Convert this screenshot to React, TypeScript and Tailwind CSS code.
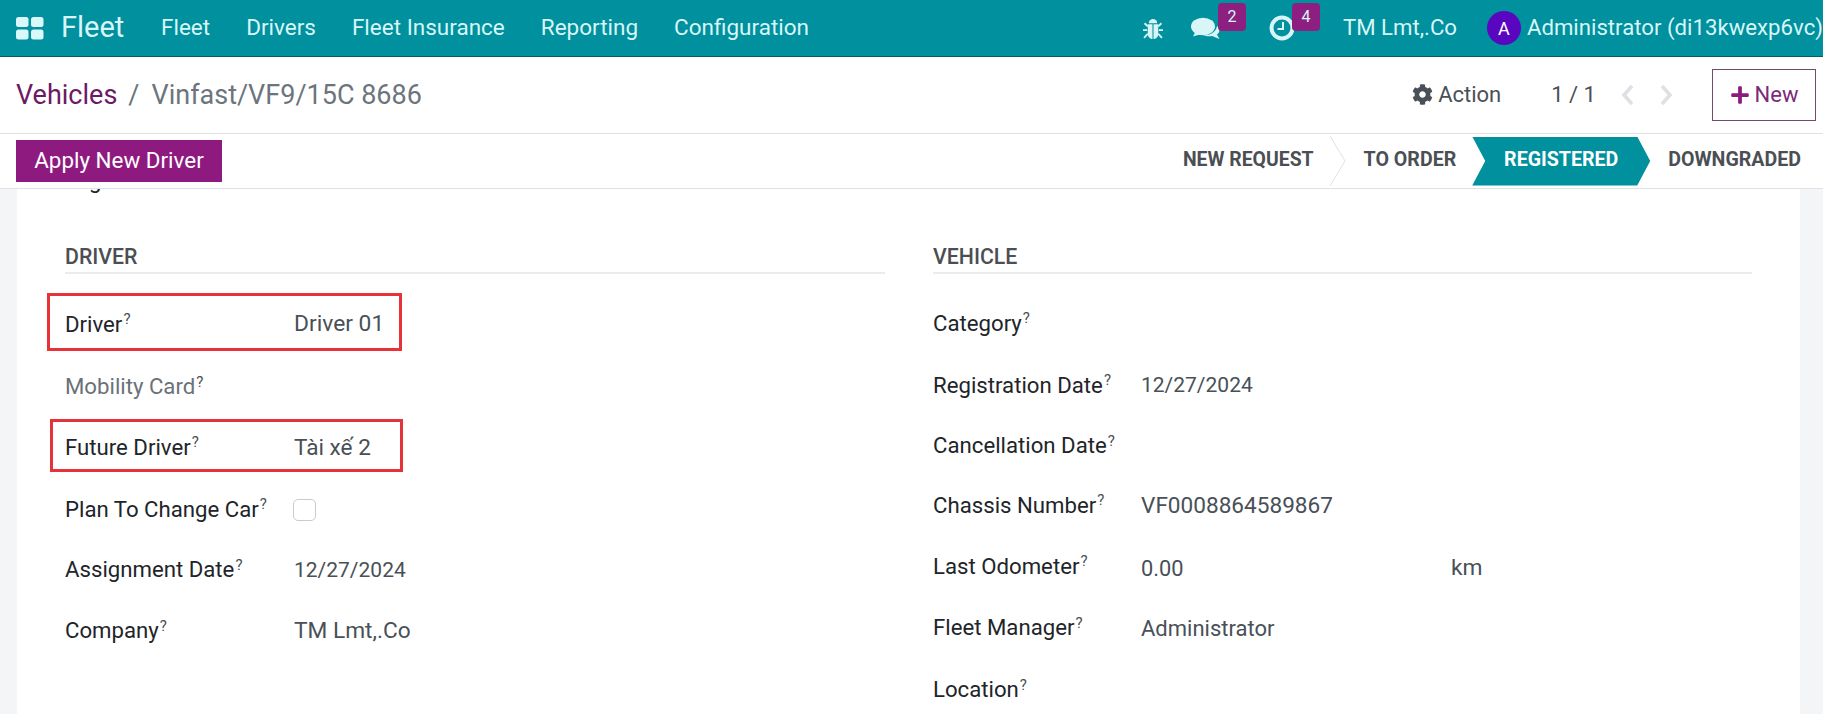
import { FaCog, FaPlus } from "react-icons/fa";

const leftRows = [
  { label: "Driver", value: "Driver 01", h: "h-[63px]", size: "text-[22.8px]" },
  { label: "Mobility Card", muted: true, h: "h-[60px] pt-[2px]" },
  { label: "Future Driver", value: "Tài xế 2", h: "h-[63px]", size: "text-[22.6px]" },
  { label: "Plan To Change Car", check: true, h: "h-[61px]" },
  { label: "Assignment Date", value: "12/27/2024", h: "h-[60px]", size: "text-[21px] pt-[2px]" },
  { label: "Company", value: "TM Lmt,.Co", h: "h-[60px] pt-[2px]", size: "text-[22.7px]" },
];

const rightRows = [
  { label: "Category", h: "h-[61px]" },
  { label: "Registration Date", value: "12/27/2024", h: "h-[61px] pt-[2px]", size: "text-[21px]" },
  { label: "Cancellation Date", h: "h-[60px] pt-[2px]" },
  { label: "Chassis Number", value: "VF0008864589867", h: "h-[61px]", size: "text-[22.6px]" },
  { label: "Last Odometer", value: "0.00", unit: "km", h: "h-[61px]", size: "text-[21.8px] pt-[5px]" },
  { label: "Fleet Manager", value: "Administrator", h: "h-[62px]", size: "text-[22px]" },
  { label: "Location", h: "h-[60px] pt-[2px]" },
];

function Label({ text, muted }: { text: string; muted?: boolean }) {
  return (
    <span className={muted ? "text-[#6b7177]" : "text-[#212529]"}>
      {text}
      <sup className="text-[15px] text-[#4a4f55] ml-px">?</sup>
    </span>
  );
}

function BugIcon() {
  return (
    <svg width="20" height="21" viewBox="0 0 19 20" fill="currentColor" stroke="currentColor" strokeWidth="0">
      <path d="M5.5 5a4 4 0 0 1 8 0z" />
      <path d="M4.5 6H9v14c-2.5 0-4.5-2-4.5-5z" />
      <path d="M14.5 6H10v14c2.5 0 4.5-2 4.5-5z" />
      <path d="M4.5 8 1.5 5M4 11.5H0M4.5 15 1 19M14.5 8l3-3M15 11.5h4M14.5 15l3.5 4" fill="none" strokeWidth="1.8" />
    </svg>
  );
}

function CommentsIcon() {
  return (
    <svg width="30" height="24" viewBox="0 0 30 24" fill="currentColor">
      <ellipse cx="12" cy="10.5" rx="12" ry="8.7" />
      <path d="M4.5 15.5 2 20.5l8.5-2.5z" />
      <path d="M26 10c3 2 3.5 6 0 8.5l2.5 4.5-7.500-3c-3 .5-7 0-9-.5C18.500 19.500 25 16.500 26 10z" />
    </svg>
  );
}

function ClockIcon() {
  return (
    <svg width="26" height="26" viewBox="0 0 26 26" fill="none" stroke="currentColor">
      <circle cx="13" cy="13" r="10.500" strokeWidth="4" />
      <path d="M14 7v7H8.500" strokeWidth="2" />
    </svg>
  );
}

function Chevron({ d }: { d: string }) {
  return (
    <svg width="16" height="22" viewBox="0 0 16 22" fill="none" stroke="#dde0e4" strokeWidth="3.500">
      <path d={d} />
    </svg>
  );
}

export default function App() {
  return (
    <div className="h-[714px] overflow-hidden bg-[#f4f5f7] text-[22.2px] font-['Roboto',sans-serif]">
      <header className="h-[57px] bg-[#00909e] border-b border-[#045f68] flex items-center text-[#d8f6f7] pl-4 pr-0">
        <svg width="28" height="23" viewBox="0 0 28 23" className="fill-[#d9f8fa]">
          <rect x="0" y="0" width="12.500" height="10" rx="2.500" />
          <rect x="15" y="0" width="12.500" height="10" rx="2.500" />
          <rect x="0" y="12.500" width="12.500" height="10" rx="2.500" />
          <rect x="15" y="12.500" width="12.500" height="10" rx="2.500" />
        </svg>
        <span className="ml-[17px] text-[29px] w-[100px]">Fleet</span>
        <nav className="flex gap-[36px] text-[22.5px]">
          <span>Fleet</span>
          <span>Drivers</span>
          <span>Fleet Insurance</span>
          <span>Reporting</span>
          <span>Configuration</span>
        </nav>
        <div className="ml-auto flex items-center whitespace-nowrap text-[22.2px]">
          <BugIcon />
          <div className="relative ml-[28px] w-[78px] h-[40px] flex items-center">
            <CommentsIcon />
            <span className="absolute left-[27px] top-[-5px] w-[28px] h-[28px] rounded-[4px] bg-[#8c1f7f] text-[16px] flex items-center justify-center">2</span>
          </div>
          <div className="relative w-[74px] h-[40px] flex items-center">
            <ClockIcon />
            <span className="absolute left-[23px] top-[-5px] w-[28px] h-[28px] rounded-[4px] bg-[#8c1f7f] text-[16px] flex items-center justify-center">4</span>
          </div>
          <span className="w-[144px]">TM Lmt,.Co</span>
          <span className="w-[34px] h-[34px] rounded-full bg-[#5a05c0] text-white text-[18px] flex items-center justify-center">A</span>
          <span className="ml-[6px]">Administrator (di13kwexp6vc)</span>
        </div>
      </header>

      <div className="h-[77px] bg-white border-b border-[#dee2e6] flex items-center pl-4 pr-[7px] text-[#495057]">
        <div className="text-[27px] flex">
          <span className="text-[#6c1a63]">Vehicles</span>
          <span className="ml-[11px] text-[#6c757d]">/</span>
          <span className="ml-[12px] text-[#6c757d]">Vinfast/VF9/15C 8686</span>
        </div>
        <div className="ml-auto flex items-center text-[22px]">
          <FaCog className="text-[21px] mb-[2px]" />
          <span className="ml-[5px] mb-[2px]">Action</span>
          <span className="ml-[50px] mb-[2px]">1 / 1</span>
          <span className="ml-[24px]"><Chevron d="M12 2 4 11l8 9" /></span>
          <span className="ml-[22px]"><Chevron d="M4 2l8 9-8 9" /></span>
          <button className="ml-[38px] w-[104px] h-[52px] border border-[#714b67] flex items-center justify-center text-[#7c2a75]">
            <FaPlus className="text-[20px] text-[#8c1a7f]" />
            <span className="ml-[5px] mb-[2px]">New</span>
          </button>
        </div>
      </div>

      <div className="h-[55px] bg-white border-b border-[#dee2e6] flex items-center pl-4 pr-[22px]">
        <button className="w-[206px] h-[42px] bg-[#8f1a7f] text-white text-[22.4px]">Apply New Driver</button>
        <div className="ml-auto flex items-center font-bold text-[#4b4f54] text-[19.6px]">
          <span className="mb-[2px] text-[19.4px]">NEW REQUEST</span>
          <svg width="18" height="50" viewBox="0 0 18 50" className="ml-[15px]" fill="none" stroke="#dfe2e5">
            <path d="M1 0 L16 25 L1 50" />
          </svg>
          <span className="ml-[17px] mb-[2px]">TO ORDER</span>
          <span className="ml-4 w-[178px] h-[49px] pb-[2px] bg-[#00909e] text-white flex items-center justify-center [clip-path:polygon(0_0,165px_0,100%_50%,165px_100%,0_100%,13px_50%)]">REGISTERED</span>
          <span className="ml-[18px] mb-[2px]">DOWNGRADED</span>
        </div>
      </div>

      <div className="ml-[17px] mr-[23px] h-[525px] bg-white overflow-hidden relative text-[#212529]">
        <div className="h-[26px] -mt-[22px] pl-[48px] leading-[26px]">Tags</div>
        <div className="grid grid-cols-[820px_819px] gap-x-[48px] pl-[48px] pt-[50px]">
          <section>
            <h3 className="h-[31px] border-b-2 border-[#e9ecef] font-medium text-[#4b4f54] text-[21.3px] leading-[27px]">DRIVER</h3>
            <div className="mt-[19px]">
              {leftRows.map((r) => (
                <div key={r.label} className={`flex items-center ${r.h}`}>
                  <div className="w-[229px]"><Label text={r.label} muted={r.muted} /></div>
                  {r.value && <span className={`text-[#495057] ${r.size}`}>{r.value}</span>}
                  {r.check && <span className="-ml-px w-[23px] h-[22px] rounded-[5px] border border-[#c6cbd0] bg-white" />}
                </div>
              ))}
            </div>
          </section>
          <section>
            <h3 className="h-[31px] border-b-2 border-[#e9ecef] font-medium text-[#4b4f54] text-[21.3px] leading-[27px]">VEHICLE</h3>
            <div className="mt-[19px]">
              {rightRows.map((r) => (
                <div key={r.label} className={`flex items-center ${r.h}`}>
                  <div className="w-[208px]"><Label text={r.label} /></div>
                  {r.value && <span className={`w-[310px] text-[#495057] ${r.size}`}>{r.value}</span>}
                  {r.unit && <span className="pt-1 text-[22.8px] text-[#495057]">{r.unit}</span>}
                </div>
              ))}
            </div>
          </section>
        </div>
        <div className="absolute left-[30px] top-[104px] w-[355px] h-[58px] border-[3px] border-[#e63339]" />
        <div className="absolute left-[33px] top-[230px] w-[353px] h-[53px] border-[3px] border-[#e63339]" />
      </div>
    </div>
  );
}
